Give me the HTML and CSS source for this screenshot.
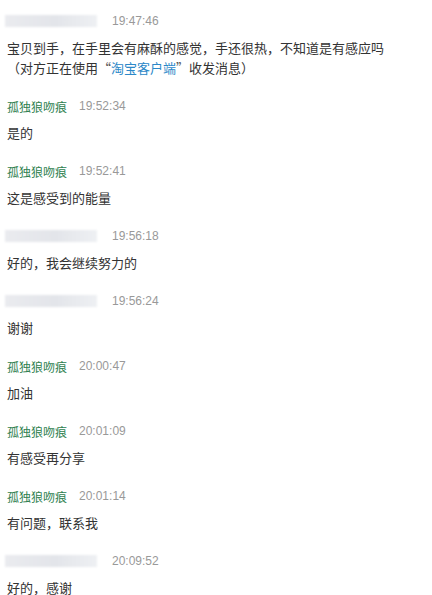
FILE: index.html
```html
<!DOCTYPE html>
<html lang="zh-CN">
<head>
    <meta charset="UTF-8">
    <meta name="viewport" content="width=device-width, initial-scale=1.0">
    <title>聊天记录</title>
    <link rel="stylesheet" href="styles.css">
</head>
<body>
    <div class="chat">
        <!-- buyer -->
        <div class="msg">
            <div class="msg-head"><span class="nick-hidden"></span><span class="time">19:47:46</span></div>
            <div class="msg-body">宝贝到手<span class="p">，</span>在手里会有麻酥的感觉<span class="p">，</span>手还很热<span class="p">，</span>不知道是有感应吗<br><span class="p">（</span>对方正在使用<span class="quote">“</span><span class="link">淘宝客户端</span><span class="quote">”</span>收发消息<span class="p">）</span></div>
        </div>
        <div class="msg">
            <div class="msg-head"><span class="nick">孤独狼吻痕</span><span class="time">19:52:34</span></div>
            <div class="msg-body">是的</div>
        </div>
        <div class="msg">
            <div class="msg-head"><span class="nick">孤独狼吻痕</span><span class="time">19:52:41</span></div>
            <div class="msg-body">这是感受到的能量</div>
        </div>
        <div class="msg">
            <div class="msg-head"><span class="nick-hidden"></span><span class="time">19:56:18</span></div>
            <div class="msg-body">好的<span class="p">，</span>我会继续努力的</div>
        </div>
        <div class="msg">
            <div class="msg-head"><span class="nick-hidden"></span><span class="time">19:56:24</span></div>
            <div class="msg-body">谢谢</div>
        </div>
        <div class="msg">
            <div class="msg-head"><span class="nick">孤独狼吻痕</span><span class="time">20:00:47</span></div>
            <div class="msg-body">加油</div>
        </div>
        <div class="msg">
            <div class="msg-head"><span class="nick">孤独狼吻痕</span><span class="time">20:01:09</span></div>
            <div class="msg-body">有感受再分享</div>
        </div>
        <div class="msg">
            <div class="msg-head"><span class="nick">孤独狼吻痕</span><span class="time">20:01:14</span></div>
            <div class="msg-body">有问题<span class="p">，</span>联系我</div>
        </div>
        <div class="msg">
            <div class="msg-head"><span class="nick-hidden"></span><span class="time">20:09:52</span></div>
            <div class="msg-body">好的<span class="p">，</span>感谢</div>
        </div>
    </div>
</body>
</html>
```

FILE: styles.css
```css
/* Chat log */
body {
    margin: 0;
    padding: 0;
    background: #fff;
    font-family: "Liberation Sans", "Noto Sans CJK SC", sans-serif;
    font-size: 12px;
    color: #333;
}
.chat {
    padding: 12px 0 0 7px;
}
.msg {
    margin-bottom: 19px;
}
.msg-head {
    display: flex;
    align-items: center;
    height: 18px;
    gap: 12px;
}
.nick {
    color: #2f7f50;
}
.nick-hidden {
    display: block;
    width: 92px;
    height: 12px;
    margin-left: -2px;
    margin-right: 3px;
    background: linear-gradient(to right, #eaebef, #e3e5ea 55%, #eef0f3);
    filter: blur(1px);
}
.time {
    color: #999;
}
.msg-body {
    margin-top: 8px;
    font-family: "Noto Sans CJK SC", sans-serif;
    font-size: 13px;
    line-height: 20px;
}
/* centred full-width punctuation */
.p {
    font-family: "Noto Sans CJK TC", sans-serif;
}
.quote {
    color: #555;
}
.link {
    color: #2c88c8;
}
```
